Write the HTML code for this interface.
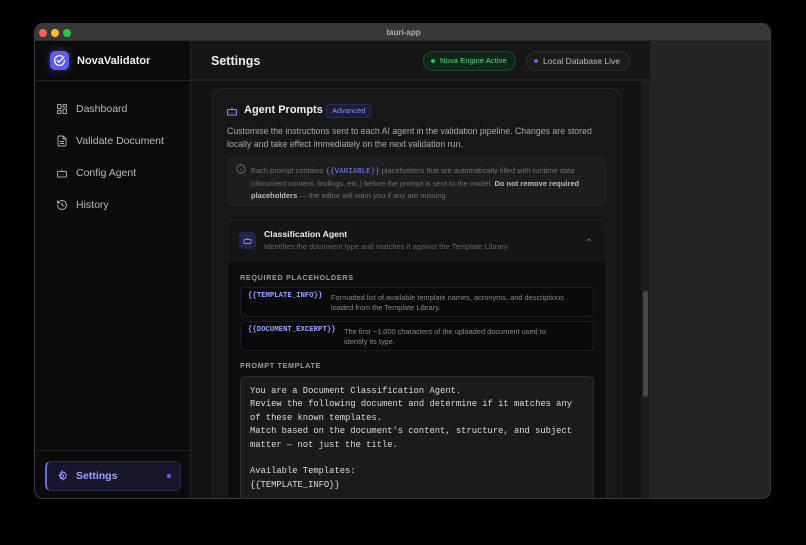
<!DOCTYPE html>
<html><head><meta charset="utf-8"><style>
*{box-sizing:border-box;margin:0;padding:0}
body{width:806px;height:545px;background:#000;font-family:"Liberation Sans",sans-serif;position:relative;overflow:hidden}
.a{position:absolute}
.win{left:34px;top:23px;width:737px;height:476px;border-radius:9px;overflow:hidden;background:#242424;border:1px solid #3a3a3a}
.t{white-space:nowrap;line-height:1}
.mono{font-family:"Liberation Mono",monospace}
</style></head><body>
<div class="a win">
 <div class="a" style="left:0;top:0;width:737px;height:17px;background:#383838;border-bottom:1px solid #2a2a2a"></div>
 <div class="a" style="left:4px;top:5px;width:8px;height:8px;border-radius:50%;background:#fe5f57"></div>
 <div class="a" style="left:16px;top:5px;width:8px;height:8px;border-radius:50%;background:#febc2e"></div>
 <div class="a" style="left:28px;top:5px;width:8px;height:8px;border-radius:50%;background:#28c840"></div>
 <div class="a t" style="left:0;width:737px;text-align:center;top:5px;font-size:8px;font-weight:bold;color:#b0b0b0">tauri-app</div>

 <!-- sidebar -->
 <div class="a" style="left:0;top:17px;width:156px;height:459px;background:#0b0b0b;border-right:1px solid #232323"></div>
 <div class="a" style="left:0;top:56px;width:156px;height:1px;background:#222"></div>
 <div class="a" style="left:15px;top:27px;width:19px;height:19px;border-radius:5px;background:#5b5bf0;box-shadow:0 0 8px rgba(99,102,241,.5)"></div>
 <svg class="a" style="left:18px;top:30px" width="13" height="13" viewBox="0 0 24 24" fill="none" stroke="#fff" stroke-width="2.4" stroke-linecap="round"><path d="M21 12a9 9 0 1 1-4-7.5"/><path d="M8 12l3 3 9-9"/></svg>
 <div class="a t" style="left:42px;top:32px;font-size:11px;font-weight:bold;color:#f2f2f2">NovaValidator</div>

 <svg class="a" style="left:21px;top:79px" width="12" height="12" viewBox="0 0 24 24" fill="none" stroke="#aaa" stroke-width="2"><rect x="3" y="3" width="7" height="8" rx="1"/><rect x="14" y="3" width="7" height="5" rx="1"/><rect x="14" y="12" width="7" height="9" rx="1"/><rect x="3" y="15" width="7" height="6" rx="1"/></svg>
 <div class="a t" style="left:41px;top:80px;font-size:10.5px;color:#b8b8b8">Dashboard</div>
 <svg class="a" style="left:21px;top:111px" width="12" height="12" viewBox="0 0 24 24" fill="none" stroke="#aaa" stroke-width="2"><path d="M14 2H6a2 2 0 0 0-2 2v16a2 2 0 0 0 2 2h12a2 2 0 0 0 2-2V8z"/><path d="M14 2v6h6M8 13h8M8 17h8"/></svg>
 <div class="a t" style="left:41px;top:112px;font-size:10.5px;color:#b8b8b8">Validate Document</div>
 <svg class="a" style="left:21px;top:143px" width="12" height="12" viewBox="0 0 24 24" fill="none" stroke="#aaa" stroke-width="2"><rect x="3" y="9" width="18" height="11" rx="2"/><path d="M12 9V5M9 14v1M15 14v1"/></svg>
 <div class="a t" style="left:41px;top:144px;font-size:10.5px;color:#b8b8b8">Config Agent</div>
 <svg class="a" style="left:21px;top:175px" width="12" height="12" viewBox="0 0 24 24" fill="none" stroke="#aaa" stroke-width="2"><path d="M3 12a9 9 0 1 0 3-6.7L3 8"/><path d="M3 3v5h5M12 7v5l4 2"/></svg>
 <div class="a t" style="left:41px;top:176px;font-size:10.5px;color:#b8b8b8">History</div>

 <div class="a" style="left:0;top:426px;width:156px;height:1px;background:#222"></div>
 <div class="a" style="left:10px;top:437px;width:136px;height:30px;border-radius:6px;background:#17162b;border:1px solid #2a2950;border-left:2px solid #6366f1"></div>
 <svg class="a" style="left:21px;top:446px" width="12" height="12" viewBox="0 0 24 24" fill="none" stroke="#8f92ff" stroke-width="2"><circle cx="12" cy="12" r="3"/><path d="M12 2l2 3 3.5-.5.5 3.5 3 2-2 3 .5 3.5-3.5.5-2 3-2-3-3.5-.5.5-3.5-3-2 3-2-.5-3.5 3.5.5z"/></svg>
 <div class="a t" style="left:41px;top:447px;font-size:10.5px;font-weight:bold;color:#9fa2ff">Settings</div>
 <div class="a" style="left:132px;top:450px;width:4px;height:4px;border-radius:50%;background:#6366f1"></div>

 <!-- header -->
 <div class="a" style="left:156px;top:17px;width:459px;height:39px;background:#161616;border-bottom:1px solid #222"></div>
 <div class="a t" style="left:176px;top:31px;font-size:12.5px;font-weight:bold;color:#f0f0f0">Settings</div>
 <div class="a" style="left:388px;top:27px;width:93px;height:20px;border-radius:10px;background:#0f2818;border:1px solid #1d4a2c"></div>
 <div class="a" style="left:396px;top:35px;width:4px;height:4px;border-radius:50%;background:#22c55e"></div>
 <div class="a t" style="left:405px;top:33px;font-size:7.7px;color:#4ade80">Nova Engine Active</div>
 <div class="a" style="left:491px;top:27px;width:104px;height:20px;border-radius:10px;background:#1c1c1c;border:1px solid #2c2c2c"></div>
 <div class="a" style="left:499px;top:35px;width:4px;height:4px;border-radius:50%;background:#6366f1"></div>
 <div class="a t" style="left:508px;top:33px;font-size:8.5px;color:#bbb">Local Database Live</div>

 <!-- main -->
 <div class="a" style="left:156px;top:57px;width:450px;height:419px;background:#131313"></div>
 <div class="a" style="left:606px;top:57px;width:9px;height:419px;background:#1c1c1c"></div>
 <div class="a" style="left:608px;top:267px;width:5px;height:106px;border-radius:3px;background:#4a4a4a"></div>

 <div class="a" style="left:177px;top:64px;width:410px;height:430px;border-radius:10px;background:#171717;border:1px solid #262626"></div>
 <svg class="a" style="left:191px;top:81px" width="12" height="12" viewBox="0 0 24 24" fill="none" stroke="#8a8dff" stroke-width="2.2"><rect x="3" y="9" width="18" height="11" rx="2"/><path d="M12 9V5M9 14v1M15 14v1"/></svg>
 <div class="a t" style="left:209px;top:81px;font-size:11px;font-weight:bold;color:#f2f2f2">Agent Prompts</div>
 <div class="a" style="left:291px;top:80px;width:45px;height:14px;border-radius:3px;background:#1d1d38;border:1px solid #2c2c55"></div>
 <div class="a t" style="left:297px;top:83px;font-size:7.5px;color:#8b8cf8">Advanced</div>
 <div class="a t" style="left:192px;top:101px;font-size:8.75px;color:#a8a8a8;line-height:13px">Customise the instructions sent to each AI agent in the validation pipeline. Changes are stored<br>locally and take effect immediately on the next validation run.</div>

 <div class="a" style="left:192px;top:132px;width:380px;height:50px;border-radius:6px;background:#1e1e1e"></div>
 <svg class="a" style="left:201px;top:140px" width="10" height="10" viewBox="0 0 24 24" fill="none" stroke="#777" stroke-width="2"><circle cx="12" cy="12" r="10"/><path d="M12 16v-5M12 8h0"/></svg>
 <div class="a t" style="left:216px;top:141px;font-size:7.5px;color:#707070;line-height:12px">Each prompt contains <span class="mono" style="color:#7c80f0">{{VARIABLE}}</span> placeholders that are automatically filled with runtime data<br>(document content, findings, etc.) before the prompt is sent to the model. <b style="color:#bbb">Do not remove required</b><br><b style="color:#bbb">placeholders</b> — the editor will warn you if any are missing.</div>

 <div class="a" style="left:192px;top:195px;width:380px;height:290px;border-radius:8px;background:#0d0d0d;border:1px solid #222"></div>
 <div class="a" style="left:193px;top:196px;width:378px;height:42px;border-radius:8px 8px 0 0;background:#151515"></div>
 <div class="a" style="left:204px;top:208px;width:17px;height:17px;border-radius:4px;background:#25254a"></div>
 <svg class="a" style="left:208px;top:212px" width="9" height="9" viewBox="0 0 24 24" fill="none" stroke="#8a8dff" stroke-width="2.4"><rect x="3" y="9" width="18" height="11" rx="2"/><path d="M12 9V5"/></svg>
 <div class="a t" style="left:229px;top:206px;font-size:8.7px;font-weight:bold;color:#eee">Classification Agent</div>
 <div class="a t" style="left:229px;top:219px;font-size:7.6px;color:#666">Identifies the document type and matches it against the Template Library.</div>
 <svg class="a" style="left:550px;top:212px" width="8" height="8" viewBox="0 0 24 24" fill="none" stroke="#777" stroke-width="2.5"><path d="M6 15l6-6 6 6"/></svg>

 <div class="a t" style="left:205px;top:250px;font-size:7.3px;font-weight:bold;color:#999;letter-spacing:.6px">REQUIRED PLACEHOLDERS</div>
 <div class="a" style="left:205px;top:263px;width:354px;height:30px;border-radius:4px;background:#0a0a0a;border:1px solid #1d1d26"></div>
 <div class="a t mono" style="left:213px;top:269px;font-size:7.3px;font-weight:bold;color:#9aa0ff">{{TEMPLATE_INFO}}</div>
 <div class="a t" style="left:296px;top:269px;font-size:7.4px;color:#888;line-height:10px">Formatted list of available template names, acronyms, and descriptions<br>loaded from the Template Library.</div>
 <div class="a" style="left:205px;top:297px;width:354px;height:30px;border-radius:4px;background:#0a0a0a;border:1px solid #1d1d26"></div>
 <div class="a t mono" style="left:213px;top:303px;font-size:7.3px;font-weight:bold;color:#9aa0ff">{{DOCUMENT_EXCERPT}}</div>
 <div class="a t" style="left:309px;top:303px;font-size:7.4px;color:#888;line-height:10px">The first ~1,000 characters of the uploaded document used to<br>identify its type.</div>

 <div class="a t" style="left:205px;top:338px;font-size:7.3px;font-weight:bold;color:#999;letter-spacing:.6px">PROMPT TEMPLATE</div>
 <div class="a" style="left:205px;top:352px;width:354px;height:140px;border-radius:6px;background:#1b1b1b;border:1px solid #2e2e2e"></div>
 <div class="a t mono" style="left:215px;top:361px;font-size:8.8px;color:#ddd;line-height:13.4px">You are a Document Classification Agent.<br>Review the following document and determine if it matches any<br>of these known templates.<br>Match based on the document's content, structure, and subject<br>matter — not just the title.<br><br>Available Templates:<br>{{TEMPLATE_INFO}}</div>
</div>
</body></html>
